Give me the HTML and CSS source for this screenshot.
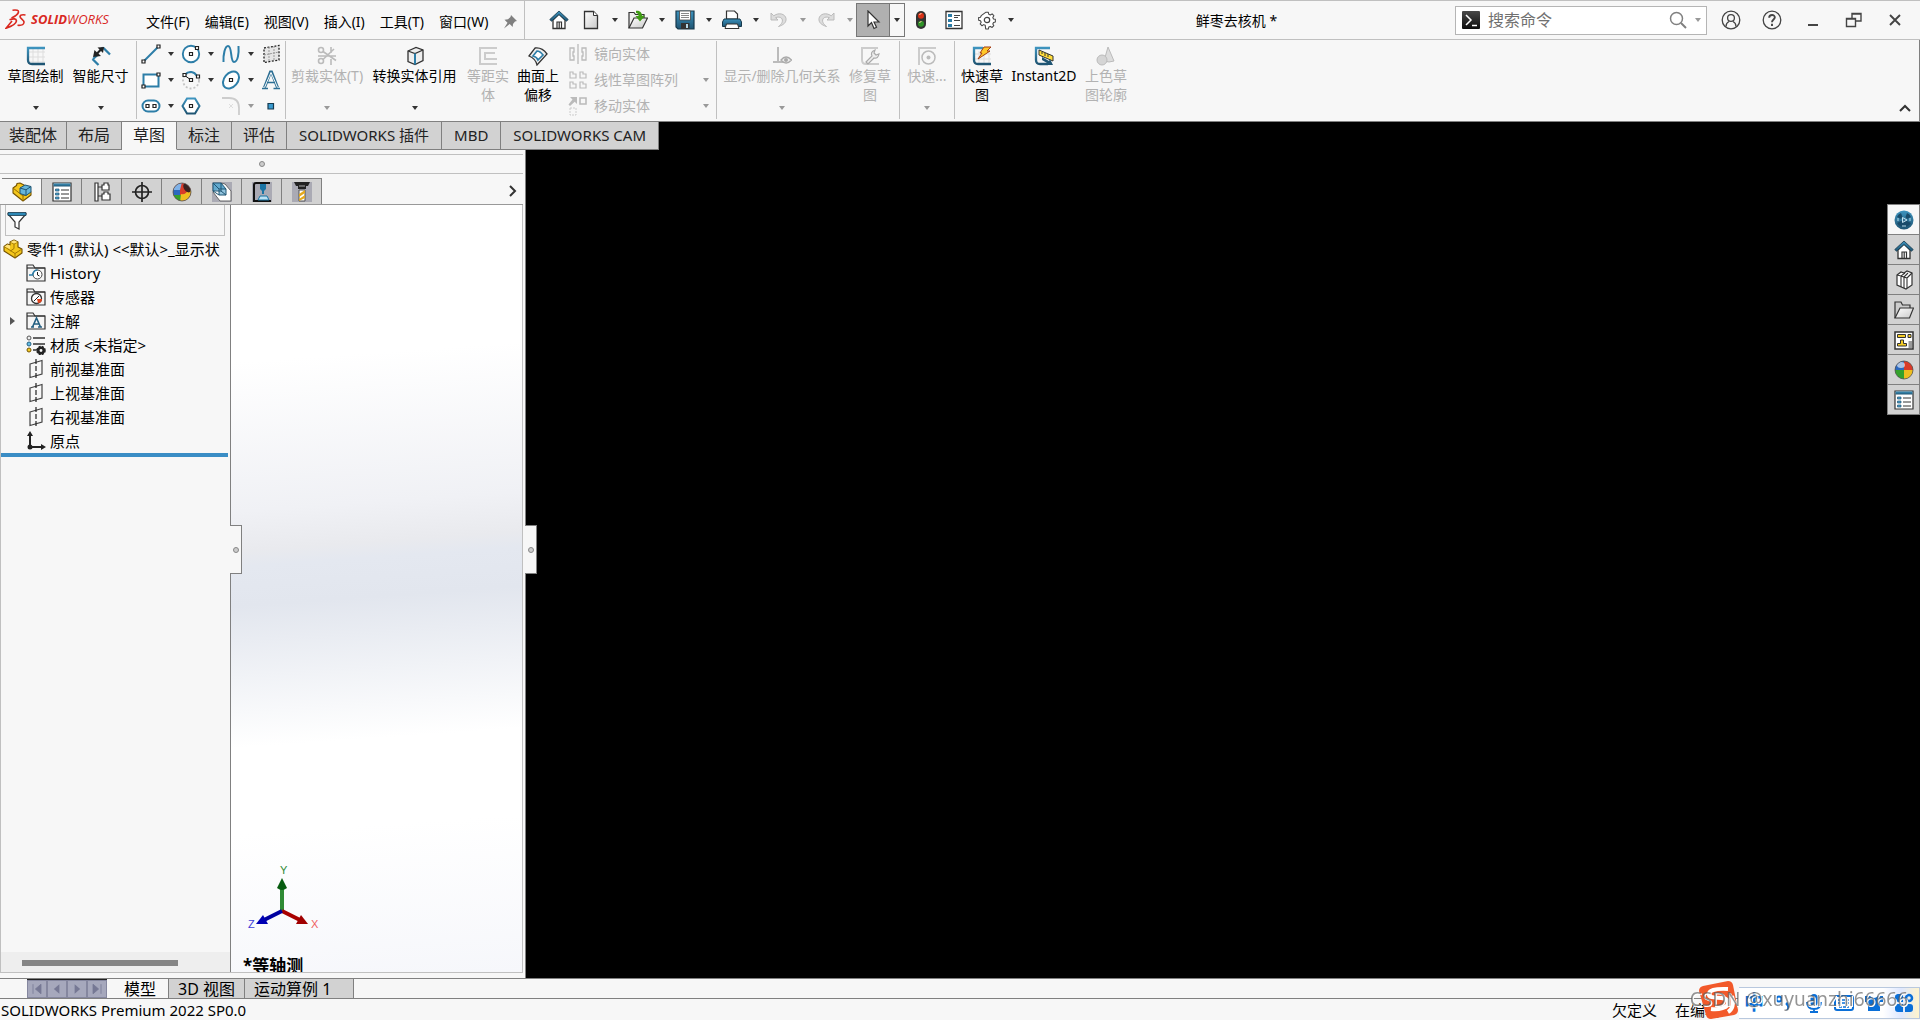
FILE: index.html
```
<!DOCTYPE html>
<html lang="zh-CN">
<head>
    <meta charset="UTF-8">
    <meta name="viewport" content="width=device-width, initial-scale=1.0">
    <title>SOLIDWORKS Premium 2022 SP0.0</title>
    <link rel="stylesheet" href="styles.css">
</head>
<body>
    <!-- shared icons -->
    <svg class="defs" aria-hidden="true">
        <defs>
            <linearGradient id="steel" x1="0" y1="0" x2="0" y2="1"><stop offset="0" stop-color="#3d93be"/><stop offset="1" stop-color="#1f5573"/></linearGradient>
            <linearGradient id="paper" x1="0" y1="0" x2="1" y2="1"><stop offset="0" stop-color="#fff"/><stop offset="1" stop-color="#c9c9c9"/></linearGradient>
            <linearGradient id="dark" x1="0" y1="0" x2="0" y2="1"><stop offset="0" stop-color="#4a4a4a"/><stop offset="1" stop-color="#0c0c0c"/></linearGradient>
            <clipPath id="ballClip"><circle cx="10" cy="10" r="9"/></clipPath>
        </defs>
        <symbol id="i-home" viewBox="0 0 20 20"><path d="M4 10v8.500h12V10L10 4z" fill="#fff" stroke="#333" stroke-width="1.300"/><path d="M8 18.500V12h4.500v6.500M10.200 12v6.500" fill="none" stroke="#333" stroke-width="1.200"/><path d="M10 1 .8 9.500l1.700 1.800L10 4.600l7.500 6.700 1.700-1.800z" fill="url(#steel)" stroke="#16384b" stroke-width=".8"/></symbol>
        <symbol id="i-new" viewBox="0 0 20 20"><path d="M3.500 1.500h9l4 4v13h-13z" fill="url(#paper)" stroke="#333" stroke-width="1.300"/><path d="M12.500 1.500v4h4" fill="#fff" stroke="#333"/></symbol>
        <symbol id="i-open" viewBox="0 0 20 20"><path d="M1 18V2.500h5l1.500 2H16V8" fill="#eee" stroke="#333" stroke-width="1.200"/><path d="M1 18 6 8h13.500L14.500 18z" fill="url(#paper)" stroke="#333" stroke-width="1.200"/><path d="M8 .8c3-.5 6 1 6 5h3L12 11.500 7.500 6h3c0-2-1-3-2.500-3z" fill="#3f9b14"/></symbol>
        <symbol id="i-save" viewBox="0 0 20 20"><path d="M1 1h18v18H3l-2-2z" fill="url(#steel)" stroke="#16384b" stroke-width="1.200"/><path d="M4.500 1h11v9h-11z" fill="#fff" stroke="#444" stroke-width=".8"/><path d="M6 3.500h8M6 5.500h8M6 7.500h8" stroke="#888"/><path d="M6 13h8.500v6H6z" fill="#333"/><path d="M11 14h2v4h-2z" fill="#b5d8e8"/></symbol>
        <symbol id="i-print" viewBox="0 0 20 20"><path d="M4.500 9V1h8l3 3v5z" fill="#fff" stroke="#333" stroke-width="1.200"/><path d="M2 9h16l1.500 3v4.500H.5V12z" fill="url(#steel)" stroke="#16384b"/><path d="M4.500 14h11l1.500 4.500H3z" fill="#fff" stroke="#333"/></symbol>
        <symbol id="i-undo" viewBox="0 0 20 20"><path d="M2 3v7h7L6.600 7.700c5-2 8 1.300 6.400 4.800-.6 1.500-1.800 2.500-3.500 4 5-1.500 8-4 7.500-8C16.300 4 10 2 4.800 5.800z" fill="#ddd" stroke="#bbb"/></symbol>
        <symbol id="i-cursor" viewBox="0 0 20 20"><path d="M5 1v15l3.500-3.500L11 18.500l2.500-1.200L11 12h5z" fill="#fff" stroke="#333" stroke-width="1.200"/></symbol>
        <symbol id="i-light" viewBox="0 0 20 20"><rect x="5" y="1" width="10" height="18" rx="5" fill="#333"/><circle cx="10" cy="5.800" r="3" fill="#d93116"/><circle cx="10" cy="13.700" r="3" fill="#2e9427"/><path d="M8.500 5a2 2 0 0 1 2-1.500M8.500 13a2 2 0 0 1 2-1.500" stroke="#ffc8a8" fill="none"/></symbol>
        <symbol id="i-options" viewBox="0 0 20 20"><path d="M2 1.500h16v17H2z" fill="#fff" stroke="#333" stroke-width="1.300"/><path d="M4 4h4v3H4zM4 9h4v3H4zM4 14h4v3H4z" fill="#2b7ca6"/><path d="M10 5.500h6M10 7.500h4M10 10.500h6M10 15.500h6" stroke="#444"/></symbol>
        <symbol id="i-gear" viewBox="0 0 20 20"><path d="M8.500 1.500h3l.5 2.200 1.800.8 2-1.200 2 2-1.200 2 .8 1.700 2.100.5v3l-2.100.5-.8 1.700 1.200 2-2 2-2-1.200-1.800.8-.5 2.200h-3L8 16.300l-1.800-.8-2 1.200-2-2 1.200-2-.8-1.700-2.100-.5v-3L2.600 7l.8-1.700z" transform="translate(1.200 1) scale(.88)" fill="#fff" stroke="#444" stroke-width="1.200" stroke-linejoin="round"/><circle cx="10" cy="10" r="2.700" fill="#fff" stroke="#444" stroke-width="1.200"/></symbol>
        <symbol id="i-person" viewBox="0 0 20 20"><g fill="none" stroke="#444" stroke-width="1.300"><circle cx="10" cy="10" r="8.800"/><circle cx="10" cy="8" r="3.400"/><path d="M5 16.500c0-3 2-4.500 3-5M15 16.500c0-3-2-4.500-3-5"/></g></symbol>
        <symbol id="i-help" viewBox="0 0 20 20"><g fill="none" stroke="#444"><circle cx="10" cy="10" r="8.800" stroke-width="1.300"/><path d="M7.200 7.700c0-3.700 5.800-3.500 5.600-.2C12.700 9.500 10 9.500 10 12.200M10 13.700V16" stroke-width="1.900"/></g></symbol>
        <symbol id="i-list" viewBox="0 0 20 20"><path d="M1 1h18v18H1z" fill="#fff" stroke="#333" stroke-width="1.200"/><path d="M1.500 1.500h17v3h-17z" fill="url(#steel)"/><path d="M3.500 7h3.500v2H3.500zM3.500 11h3.500v2H3.500zM3.500 15h3.500v2H3.500z" fill="#4aa0cb" stroke="#1f5573" stroke-width=".7"/><path d="M9 8h8M9 12h8M9 16h8" stroke="#333"/></symbol>
        <symbol id="i-part" viewBox="0 0 20 20"><path d="M1 7.500 4.500 5 7 6V3l4-2 4 2v5l4 2v4l-7 5L1 12z" fill="#f3c61c" stroke="#745200" stroke-width="1.100" stroke-linejoin="round"/><path d="m7 3 4 2 4-2M11 5v4.500L7.500 12M1 7.500 12 14.500l7-4.500M12 14.500V19" fill="none" stroke="#9a7100" stroke-width=".9"/><path d="m7.500 3 3.500-1.700L14.500 3 11 4.600zM1.500 7.500l3-2 2.500 1V10z" fill="#ffe27a"/></symbol>
        <symbol id="i-ball" viewBox="0 0 20 20"><g clip-path="url(#ballClip)"><path d="M0 0h10v10H0z" fill="#2c69bf"/><path d="M10 0h10v10H10z" fill="#d83b2a"/><path d="M0 10h10v10H0z" fill="#35a12c"/><path d="M10 10h10v10H10z" fill="#efbe20"/><ellipse cx="7" cy="5" rx="4" ry="3" fill="#fff" opacity=".6"/></g><circle cx="10" cy="10" r="9" fill="none" stroke="#444" stroke-width=".7"/></symbol>
        <symbol id="i-plane" viewBox="0 0 20 20"><path d="m4 5 12-3.500V15L4 18.500z" fill="none" stroke="#444" stroke-width="1.200"/><path d="M10 0v20" stroke="#222" stroke-width="1.200" stroke-dasharray="5 2"/></symbol>
        <symbol id="i-folder" viewBox="0 0 20 20"><path d="M1 18V2h6l2 3h10v13z" fill="#f5f5f5" stroke="#333" stroke-width="1.200"/><path d="M1 5h18" stroke="#333" stroke-width="1.200"/></symbol>
    </svg>

    <header class="titlebar">
        <div class="menu-area">
            <a class="logo" href="#" aria-label="SOLIDWORKS">
                <svg width="22" height="20" viewBox="0 0 22 20"><g fill="none" stroke="#d9281f" stroke-width="1.600"><path d="M7.500 1.200Q14 .5 13.500 3 13 6 6.500 9"/><path d="M4.500 10.800q6.500-2.300 7 1-.5 4-10.500 7.400L7 12"/><path d="M20.500 6q-5-.8-5.500 1.500c-.2 2 4.500 3.500 4 6q-.5 3.300-6.500 2.800"/></g></svg>
                <span><b>SOLID</b>WORKS</span>
            </a>
            <nav class="menu">
                <button>文件(F)</button>
                <button>编辑(E)</button>
                <button>视图(V)</button>
                <button>插入(I)</button>
                <button>工具(T)</button>
                <button>窗口(W)</button>
                <button class="pin" aria-label="固定"><svg width="14" height="14" viewBox="0 0 14 14"><path d="m8 0 6 6-2 .5L10 9l-.3 3-3-3L1 13.500l3.500-5.700-3-3L5 4.300 7.500 2z" fill="#808080"/></svg></button>
            </nav>
        </div>
        <div class="quick">
            <button aria-label="主页"><svg class="ic"><use href="#i-home"/></svg></button>
            <button aria-label="新建"><svg class="ic"><use href="#i-new"/></svg></button><button class="drop" aria-label="新建选项"></button>
            <button aria-label="打开"><svg class="ic"><use href="#i-open"/></svg></button><button class="drop" aria-label="打开选项"></button>
            <button aria-label="保存"><svg class="ic"><use href="#i-save"/></svg></button><button class="drop" aria-label="保存选项"></button>
            <button aria-label="打印"><svg class="ic"><use href="#i-print"/></svg></button><button class="drop" aria-label="打印选项"></button>
            <button aria-label="撤消"><svg class="ic"><use href="#i-undo"/></svg></button><button class="drop off" aria-label="撤消选项"></button>
            <button aria-label="重做"><svg class="ic flip"><use href="#i-undo"/></svg></button><button class="drop off" aria-label="重做选项"></button>
            <span class="picked"><button aria-label="选择"><svg class="ic"><use href="#i-cursor"/></svg></button><button class="drop" aria-label="选择选项"></button></span>
            <button class="plain" aria-label="重建模型"><svg class="ic"><use href="#i-light"/></svg></button>
            <button class="plain" aria-label="文件属性"><svg class="ic"><use href="#i-options"/></svg></button>
            <button class="plain" aria-label="选项"><svg class="ic"><use href="#i-gear"/></svg></button><button class="drop" aria-label="选项列表"></button>
        </div>
        <h1>鲜枣去核机 *</h1>
        <form class="search">
            <svg width="18" height="18" viewBox="0 0 18 18"><rect width="18" height="18" rx="1" fill="url(#dark)"/><path d="m4 4 5 5-5 5M10 14.500h5" fill="none" stroke="#fff" stroke-width="1.500"/></svg>
            <input type="text" placeholder="搜索命令" aria-label="搜索命令">
            <button type="button" aria-label="搜索"><svg width="18" height="18" viewBox="0 0 18 18"><circle cx="7.500" cy="7.500" r="6" fill="none" stroke="#808080" stroke-width="1.500"/><path d="m12 12 5 5" stroke="#808080" stroke-width="2"/></svg></button>
            <button type="button" class="drop off" aria-label="搜索范围"></button>
        </form>
        <div class="window-buttons">
            <button aria-label="登录"><svg class="ic"><use href="#i-person"/></svg></button>
            <button aria-label="帮助"><svg class="ic"><use href="#i-help"/></svg></button>
            <button aria-label="最小化"><svg class="ic" viewBox="0 0 20 20"><path d="M5 15h10" stroke="#444" stroke-width="2"/></svg></button>
            <button aria-label="还原"><svg class="ic" viewBox="0 0 20 20"><path d="M8 8V3.500h9V11h-5.500M2.500 8.500h9v8h-9zM2 9h10M8 4h9" fill="none" stroke="#444" stroke-width="1.400"/></svg></button>
            <button aria-label="关闭"><svg class="ic" viewBox="0 0 20 20"><path d="m5 5 10 10M15 5 5 15" stroke="#444" stroke-width="1.900"/></svg></button>
        </div>
    </header>

    <div class="ribbon">
        <section class="group">
            <button class="tool w-m arrow"><svg class="ic" viewBox="0 0 20 20"><path d="M7 1v18M12 1v18M17 1v18M3 6h16M3 11h16M3 16h16" stroke="#ddd"/><path d="M19 2H2v12q0 4 4 4h13" fill="none" stroke="url(#steel)" stroke-width="2.300"/></svg><span>草图绘制</span></button>
            <button class="tool w-m arrow"><svg class="ic" viewBox="0 0 20 20"><path d="m1.500 13 6 6M12 1.500l7 7M2 13l4-3.500M12 1.500l-2 2" stroke="#2d7ea8" stroke-width="2.300"/><path d="m2 11 1.500-7L5.800 6.200 8.500 3.500 6.500 1.500 13 1l-1 6-2-2-2.500 2.500L10 10z" fill="#222"/></svg><span>智能尺寸</span></button>
        </section>
        <section class="group sketch-grid">
            <div class="cell"><button aria-label="直线"><svg class="ic" viewBox="0 0 20 20"><path d="M2.500 17.500 17.500 2.500" stroke="#2d7ea8" stroke-width="2"/><path d="M16 1h3v3h-3zM1 16h3v3H1z" fill="#fff" stroke="#222" stroke-width="1.200"/></svg></button><button class="drop" aria-label="直线选项"></button></div>
            <div class="cell"><button aria-label="圆"><svg class="ic" viewBox="0 0 20 20"><circle cx="10" cy="10" r="8.200" fill="#fff" stroke="#2d7ea8" stroke-width="1.900"/><path d="M8.500 8.500h3v3h-3zM14.500 2.500h3v3h-3z" fill="#fff" stroke="#222" stroke-width="1.200"/></svg></button><button class="drop" aria-label="圆选项"></button></div>
            <div class="cell"><button aria-label="样条曲线"><svg class="ic" viewBox="0 0 20 20"><path d="M2.500 18C2 11 4 2 7 2c4.500 0 2 16 6 16 4 0 5-9 4.500-16" fill="none" stroke="#2d7ea8" stroke-width="2"/></svg></button><button class="drop" aria-label="样条曲线选项"></button></div>
            <div class="cell"><button aria-label="平面"><svg class="ic" viewBox="0 0 20 20"><path d="m3 4 15-2.500V16L3 18.500z" fill="#e6e6e6" stroke="#222" stroke-width="1.300" stroke-dasharray="2 1.500"/><path d="M8 3v15M13 2v15M3 11l15-3" stroke="#999" stroke-dasharray="2 1"/></svg></button></div>
            <div class="cell"><button aria-label="矩形"><svg class="ic" viewBox="0 0 20 20"><path d="M2.500 4.500h15v12h-15z" fill="#fff" stroke="#2d7ea8" stroke-width="2"/><path d="M16 3h3v3h-3zM1 15h3v3H1z" fill="#fff" stroke="#222" stroke-width="1.200"/></svg></button><button class="drop" aria-label="矩形选项"></button></div>
            <div class="cell"><button aria-label="圆弧"><svg class="ic" viewBox="0 0 20 20"><circle cx="10" cy="10.500" r="8" fill="none" stroke="#c5c5c5" stroke-width="1.800" stroke-dasharray="2 2"/><path d="M4 4.500c4-4 9-3 12 1.500" fill="none" stroke="#2d7ea8" stroke-width="2"/><path d="m3 5 7 5" stroke="#222"/><path d="M2 3.500h3v3H2zM8.500 8.500h3v3h-3zM15.500 5h3v3h-3z" fill="#fff" stroke="#222" stroke-width="1.200"/></svg></button><button class="drop" aria-label="圆弧选项"></button></div>
            <div class="cell"><button aria-label="椭圆"><svg class="ic" viewBox="0 0 20 20"><ellipse cx="10" cy="10" rx="9.500" ry="6.800" transform="rotate(-50 10 10)" fill="#fff" stroke="#2d7ea8" stroke-width="2"/><path d="M8.500 8.500h3v3h-3z" fill="#fff" stroke="#222" stroke-width="1.200"/></svg></button><button class="drop" aria-label="椭圆选项"></button></div>
            <div class="cell"><button aria-label="文字"><svg class="ic" viewBox="0 0 20 20"><path d="m3.500 17.500 6-15.500h1l6 15.500" fill="none" stroke="#2d6f94" stroke-width="3"/><path d="m3.500 17.500 6.500-15 6.500 15" fill="none" stroke="#fff"/><path d="M1 18.500h6M12.500 18.500H19M6 12.500h8" stroke="#2d6f94" stroke-width="1.500"/></svg></button></div>
            <div class="cell"><button aria-label="槽口"><svg class="ic" viewBox="0 0 20 20"><rect x="1.500" y="4.500" width="17" height="11" rx="5.500" fill="#fff" stroke="#2d7ea8" stroke-width="2"/><path d="M5 8.500h3v3H5zM12 8.500h3v3h-3z" fill="#fff" stroke="#222" stroke-width="1.200"/></svg></button><button class="drop" aria-label="槽口选项"></button></div>
            <div class="cell"><button aria-label="多边形"><svg class="ic" viewBox="0 0 20 20"><path d="M6 2.500h8l4.500 7.500-4.500 7.500H6L1.500 10z" fill="#fff" stroke="url(#steel)" stroke-width="2"/><path d="M8.500 8.500h3v3h-3z" fill="#fff" stroke="#222" stroke-width="1.200"/></svg></button></div>
            <div class="cell"><button aria-label="圆角"><svg class="ic" viewBox="0 0 20 20"><path d="M1 2h7q10 0 10 10v7" fill="none" stroke="#ccc" stroke-width="1.800"/><path d="m8 8 4 4m0-4-4 4" stroke="#ddd"/></svg></button><button class="drop off" aria-label="圆角选项"></button></div>
            <div class="cell"><button aria-label="点"><svg class="ic" viewBox="0 0 20 20"><path d="M7 7.500h5.500V13H7z" fill="#3a9bd0" stroke="#163b50" stroke-width="1.200"/></svg></button></div>
        </section>
        <section class="group">
            <button class="tool w-l arrow" disabled><svg class="ic" viewBox="0 0 20 20"><g fill="none" stroke="#bbb" stroke-width="1.600"><circle cx="4" cy="4" r="2.500"/><circle cx="4" cy="15" r="2.500"/><path d="m6 5.500 13 9M6 13.500 17 3M1 10h18M14 1v6M14 13v6"/></g></svg><span>剪裁实体(T)</span></button>
            <button class="tool w-xl arrow"><svg class="ic" viewBox="0 0 20 20"><path d="m3 5 8-3.500L18 4v10.500l-8 4-7-3z" fill="#eee" stroke="#333" stroke-width="1.300"/><path d="m3 5 7 2.500L18 4" fill="none" stroke="#333" stroke-width="1.300"/><path d="M10 7.500v11" stroke="#2d7ea8" stroke-width="2"/></svg><span>转换实体引用</span></button>
            <button class="tool w-s" disabled><svg class="ic" viewBox="0 0 20 20"><path d="M19 2H2v16h17M17 7H7v6h12" fill="none" stroke="#ccc" stroke-width="2"/></svg><span>等距实体</span></button>
            <button class="tool w-n"><svg class="ic" viewBox="0 0 20 20"><path d="m1 10 6-8q7-1 12 6L9 19q-1-6-8-9z" fill="#eee" stroke="#333" stroke-width="1.300"/><path d="m5 10 4-5q3 0 6 4l-5 5q-1-3-5-4z" fill="#fff" stroke="#2d7ea8" stroke-width="1.700"/></svg><span>曲面上偏移</span></button>
            <div class="stack">
                <div><button disabled><svg class="ic" viewBox="0 0 20 20"><path d="M10 0v20M2 4h4v4H5v4h1v4H2zM18 4h-4v4h1v4h-1v4h4z" fill="none" stroke="#bbb" stroke-width="1.300"/></svg>镜向实体</button></div>
                <div><button disabled><svg class="ic" viewBox="0 0 20 20"><path d="M2 2h3v2h3v4H2zM12 2h3v2h3v4h-6zM2 12h3v2h3v4H2zM12 12h3v2h3v4h-6z" fill="none" stroke="#bbb" stroke-width="1.200"/></svg>线性草图阵列</button><button class="drop off" aria-label="阵列选项"></button></div>
                <div><button disabled><svg class="ic" viewBox="0 0 20 20"><path d="M12 2h6v6h-6z" fill="none" stroke="#bbb" stroke-width="1.600"/><path d="M2 1h7v7L6.700 5.700 2 10 .5 8.500 4.500 3.500z" fill="#bbb"/><path d="M2 12h6v7H2z" fill="none" stroke="#ccc" stroke-dasharray="2 1"/></svg>移动实体</button><button class="drop off" aria-label="移动选项"></button></div>
            </div>
        </section>
        <section class="group">
            <button class="tool w-xxl arrow" disabled><svg class="ic" viewBox="0 0 20 20"><path d="M6 1v15M1 16h10" stroke="#bbb" stroke-width="2"/><path d="M9 14q5-6 10.500 0-5.500 6-10.500 0z" fill="#eee" stroke="#aaa" stroke-width="1.300"/><circle cx="14" cy="14" r="2" fill="#aaa"/></svg><span>显示/删除几何关系</span></button>
            <button class="tool w-n" disabled><svg class="ic" viewBox="0 0 20 20"><path d="M18 2H2v12q0 4 4 4h13" fill="none" stroke="#ccc" stroke-width="2"/><path d="m6 16 6-6q-2-4 3-6l-1 3 2 2 3-1q-1 5-5 4l-6 6z" fill="#eee" stroke="#aaa" stroke-width="1.200"/></svg><span>修复草图</span></button>
        </section>
        <section class="group">
            <button class="tool w-s arrow" disabled><svg class="ic" viewBox="0 0 20 20"><path d="M19 2H2v17" fill="none" stroke="#ccc" stroke-width="2"/><circle cx="11.500" cy="11.500" r="6.500" fill="none" stroke="#bbb" stroke-width="1.500"/><circle cx="11.500" cy="11.500" r="2" fill="#bbb"/></svg><span>快速...</span></button>
        </section>
        <section class="group last">
            <button class="tool w-s"><svg class="ic" viewBox="0 0 20 20"><path d="M7 5v14M12 5v14M17 5v14M3 8h16M3 13h16" stroke="#ddd"/><path d="M11 2H2v12q0 4 4 4h13" fill="none" stroke="url(#steel)" stroke-width="2.300"/><path d="M12 1h7l-4 4h3L6 13l4-6H8z" fill="#ffc928" stroke="#a43c12"/></svg><span>快速草图</span></button>
            <button class="tool w-l"><svg class="ic" viewBox="0 0 20 20"><path d="M16 2H2v12q0 4 4 4h8" fill="none" stroke="url(#steel)" stroke-width="2.300"/><path d="m5 4 14 6v5L5 9z" fill="#ffdc3b" stroke="#333"/><path d="M8 6v2M11 7v3M14 8v3" stroke="#333"/><path d="m8 11 7 4 1-2 3 6h-7l1-2-5-3z" fill="#1f5573"/></svg><span>Instant2D</span></button>
            <button class="tool w-s" disabled><svg class="ic" viewBox="0 0 20 20"><path d="m12 1 6 14q-5 2-10 0z" fill="#ddd" stroke="#bbb"/><circle cx="6" cy="14" r="5" fill="#d5d5d5" stroke="#bbb"/></svg><span>上色草图轮廓</span></button>
        </section>
        <button class="collapse" aria-label="折叠"><svg width="12" height="8" viewBox="0 0 12 8"><path d="m1 7 5-5 5 5" fill="none" stroke="#333" stroke-width="2"/></svg></button>
    </div>

    <nav class="command-tabs">
        <button class="narrow">装配体</button>
        <button>布局</button>
        <button class="active">草图</button>
        <button>标注</button>
        <button>评估</button>
        <button class="latin">SOLIDWORKS 插件</button>
        <button class="latin">MBD</button>
        <button class="latin">SOLIDWORKS CAM</button>
    </nav>

    <main class="workspace">
        <div class="document">
            <div class="splitter"><i class="dot"></i></div>
            <div class="manager-tabs">
                <button class="active" aria-label="设计树"><svg class="ic" viewBox="0 0 20 20"><path d="M1 6 4.500 3.500 5 1.500 8 1l4 2v5l7 2v3l-8 6-10-8z" fill="#f3c61c" stroke="#745200" stroke-width="1.100" stroke-linejoin="round"/><path d="m1 6 10 8 8-4M11 14v5" fill="none" stroke="#9a7100"/><path d="m8 6 5-3 6 1.500V10l-5 3.500-6-2z" fill="#67b6db" stroke="#1f5573"/><path d="m8 6 6 1.800L19 4.500M14 8v5.500" fill="none" stroke="#1f5573"/></svg></button>
                <button aria-label="属性"><svg class="ic"><use href="#i-list"/></svg></button>
                <button aria-label="配置"><svg class="ic" viewBox="0 0 20 20"><path d="M3 1v18h3V1zM6 5h4M6 14h4" fill="#fff" stroke="#333" stroke-width="1.200"/><path d="M10 3h2V1h4v2h1v5h-7zM10 12h2v-2h4v2h2v6h-8z" fill="#fff" stroke="#333" stroke-width="1.200"/></svg></button>
                <button aria-label="尺寸专家"><svg class="ic" viewBox="0 0 20 20"><circle cx="10" cy="10" r="6.500" fill="none" stroke="#222" stroke-width="1.700"/><path d="M10 0v20M0 10h20" stroke="#222" stroke-width="1.700"/></svg></button>
                <button aria-label="外观"><svg class="ic" viewBox="0 0 20 20"><g clip-path="url(#ballClip)"><path d="M0 0h20v20H0z" fill="#d83b2a"/><path d="M0 0h10L8 8 0 9z" fill="#7fb2e8"/><path d="M0 8h8v6H0z" fill="#2c69bf"/><path d="M0 13h9v7H0z" fill="#35a12c"/><path d="M9 12q5 1 7-4h4v12H8z" fill="#efbe20"/><ellipse cx="15" cy="6" rx="3" ry="5" transform="rotate(-35 15 6)" fill="#3a2222"/></g><circle cx="10" cy="10" r="9" fill="none" stroke="#555" stroke-width=".8"/></svg></button>
                <button aria-label="CAM 特征"><svg class="ic shade" viewBox="0 0 20 20"><path d="m9 1 4 1 6 7v10H8l-7-9z" fill="#fff" stroke="#666"/><path d="M1 1h8l5 6H7L1 9z" fill="#62a9ce"/><path d="M1 1h8v8H1zM7 7h7v6H7z" fill="#62a9ce" fill-opacity=".7" stroke="#1f5573"/><path d="m1 1 6 6M9 1l5 6M9 9l5 4M1 9l6 4" fill="none" stroke="#1f5573"/></svg></button>
                <button aria-label="CAM 操作"><svg class="ic shade" viewBox="0 0 20 20"><path d="M18 1H4Q2 1 2 3v16h17" fill="none" stroke="#111" stroke-width="2"/><path d="M8 2h6v5l-2 2v3h-2V9L8 7z" fill="#1974a4"/><path d="M8 14h7l2 4H6z" fill="#bce2f4" stroke="#1974a4"/></svg></button>
                <button aria-label="CAM 刀具"><svg class="ic shade" viewBox="0 0 20 20"><path d="M2 0h16l-2 4h-2v3H6V4H4z" fill="#222"/><path d="M7 4h6" stroke="#aaa"/><path d="M7 8h6v11H7z" fill="#fff" stroke="#555"/><path d="m7 12 6-4v3l-6 4zm0 5 6-4v3l-6 3z" fill="#e4a91d"/></svg></button>
                <button class="more" aria-label="更多"><svg width="10" height="12" viewBox="0 0 10 12"><path d="m2 1 5 5-5 5" fill="none" stroke="#333" stroke-width="2"/></svg></button>
            </div>
            <div class="panes">
                <aside class="tree-pane">
                    <div class="filter"><svg class="ic" viewBox="0 0 20 20"><path d="M1 3h18l-7 8v7l-4-2v-5z" fill="#fff" stroke="#333" stroke-width="1.200"/><path d="M1 1.500h18v3H1z" fill="#2d88b5" stroke="#16384b" stroke-width=".8"/></svg></div>
                    <ul class="tree">
                        <li class="root"><svg class="ic"><use href="#i-part"/></svg>零件1 (默认) &lt;&lt;默认&gt;_显示状</li>
                        <li><svg class="ic" viewBox="0 0 20 20"><use href="#i-folder"/><circle cx="11.500" cy="11.500" r="4.500" fill="#fff" stroke="#444"/><path d="M11.500 9v3l2 1" fill="none" stroke="#222"/><path d="M3 12h3.500q1-5 5-5" fill="none" stroke="#2d7ea8" stroke-width="1.700"/></svg>History</li>
                        <li><svg class="ic" viewBox="0 0 20 20"><use href="#i-folder"/><circle cx="10.500" cy="11.500" r="5" fill="#fff" stroke="#333" stroke-width="1.300"/><path d="m8 14 5-5" stroke="#222"/><path d="M11 12h5q0 4-4 4z" fill="#e1421b"/></svg>传感器</li>
                        <li class="closed"><svg class="ic" viewBox="0 0 20 20"><use href="#i-folder"/><path d="M5 16h3M12 16h4M6.500 16l4-9 4 9M8 13h5" fill="none" stroke="#245f81" stroke-width="1.600"/></svg>注解</li>
                        <li><svg class="ic" viewBox="0 0 20 20"><path d="M7 3h12M7 9h12M7 15h6" stroke="#333" stroke-width="1.600"/><circle cx="3" cy="3" r="2" fill="#eee" stroke="#555"/><circle cx="3" cy="9" r="2" fill="#65bde5" stroke="#245f81"/><circle cx="3" cy="15" r="2" fill="#f4cc25" stroke="#745200"/><circle cx="15" cy="15.500" r="2.700" fill="none" stroke="#222" stroke-width="2.500"/><circle cx="15" cy="15.500" r="4" fill="none" stroke="#222" stroke-width="1.500" stroke-dasharray="2 1.200"/></svg>材质 &lt;未指定&gt;</li>
                        <li><svg class="ic"><use href="#i-plane"/></svg>前视基准面</li>
                        <li><svg class="ic"><use href="#i-plane"/></svg>上视基准面</li>
                        <li><svg class="ic"><use href="#i-plane"/></svg>右视基准面</li>
                        <li><svg class="ic" viewBox="0 0 20 20"><path d="M4 3v13h12" fill="none" stroke="#222" stroke-width="2"/><path d="M4 0 1 5h6zM20 16l-5-3v6z" fill="#222"/><circle cx="4" cy="16" r="2.500" fill="#222"/></svg>原点</li>
                    </ul>
                    <div class="scrollbar"><i></i></div>
                    <button class="handle" aria-label="折叠设计树"><i class="dot"></i></button>
                </aside>
                <div class="viewport">
                    <svg class="triad" width="80" height="72" viewBox="0 0 80 72">
                        <path d="M35 48V22" stroke="#2f8b35" stroke-width="4"/><path d="m35 15-5 10q5 4 10 0z" fill="#075c10"/>
                        <path d="m35 48 18 9" stroke="#a90000" stroke-width="4"/><path d="m61 61-12 0 5-9z" fill="#a00000"/>
                        <path d="m35 48-18 9" stroke="#0000a0" stroke-width="4"/><path d="m9 61 12 0-5-9z" fill="#0000b4"/>
                        <text x="33" y="11" fill="#2f8b35">Y</text><text x="64" y="65" fill="#f06060">X</text><text x="1" y="65" fill="#4040d8">Z</text>
                    </svg>
                    <p>*等轴测</p>
                </div>
            </div>
            <button class="handle outer" aria-label="折叠窗口"><i class="dot"></i></button>
        </div>
        <aside class="task-pane">
            <button class="active" aria-label="3DEXPERIENCE"><svg class="ic" viewBox="0 0 20 20"><circle cx="10" cy="10" r="9.500" fill="url(#steel)"/><path d="M3 7a8 8 0 0 1 4-4l1.500 4L7 9zM17 7a8 8 0 0 0-4-4l-1.500 4L13 9zM3 13a8 8 0 0 0 14 0l-4-2H7z" fill="#194b6a"/><path d="m8.500 7.500 4.500 2.500-4.500 2.500z" fill="#356f90" stroke="#c5e3f1"/><path d="M8 16h4M4 8v3M16 8v3" stroke="#b8dded"/></svg></button>
            <button aria-label="SOLIDWORKS 资源"><svg class="ic"><use href="#i-home"/></svg></button>
            <button aria-label="设计库"><svg class="ic" viewBox="0 0 20 20"><path d="m3 5 4-3 3 1 3-2 5 2v12l-6 4-9-4z" fill="#fff" stroke="#333" stroke-width="1.200"/><path d="m3 5 4 1 4-3M7 6v11M7 6l3 1 4-4M10 7v11M10 7l3 1 5-5M13 8v10" fill="none" stroke="#333" stroke-width="1.100"/></svg></button>
            <button aria-label="文件探索器"><svg class="ic" viewBox="0 0 20 20"><path d="M1 18V2h6l1.500 3H16v3" fill="#ccc" stroke="#333" stroke-width="1.200"/><path d="M1 18 6 8h13.500l-4 10z" fill="url(#paper)" stroke="#333" stroke-width="1.200"/></svg></button>
            <button aria-label="视图调色板"><svg class="ic" viewBox="0 0 20 20"><path d="M1 2h18v17H1z" fill="#fff" stroke="#333" stroke-width="1.500"/><path d="M3.500 4.500h8v3h-8zM14 4.500h3v3h-3zM6.500 10h3v3.500h3V16h-9v-2.500h3z" fill="#f4cc25" stroke="#333"/><path d="M14.500 11H18v7h-3.500z" fill="#999"/></svg></button>
            <button aria-label="外观、布景和贴图"><svg class="ic"><use href="#i-ball"/></svg></button>
            <button aria-label="自定义属性"><svg class="ic"><use href="#i-list"/></svg></button>
        </aside>
    </main>

    <div class="model-tabs">
        <div class="steps">
            <button aria-label="第一个"><svg viewBox="0 0 20 20"><path d="M5 4v12M15 4v12L8 10z" fill="#767894" stroke="#767894"/></svg></button>
            <button aria-label="上一个"><svg viewBox="0 0 20 20"><path d="M13 4v12L6 10z" fill="#767894"/></svg></button>
            <button aria-label="下一个"><svg viewBox="0 0 20 20"><path d="M7 4v12l7-6z" fill="#767894"/></svg></button>
            <button aria-label="最后一个"><svg viewBox="0 0 20 20"><path d="M15 4v12M5 4v12l7-6z" fill="#767894" stroke="#767894"/></svg></button>
        </div>
        <button class="active">模型</button>
        <button>3D 视图</button>
        <button class="wide">运动算例 1</button>
    </div>

    <footer class="statusbar">
        <span>SOLIDWORKS Premium 2022 SP0.0</span>
        <span class="state"><span>欠定义</span><span>在编辑</span></span>
    </footer>

    <!-- input method bar floating above the status bar -->
    <div class="ime">
        <svg class="sogou" width="40" height="38" viewBox="0 0 40 38"><path d="M4 5 29 0q4 0 5 4l5 25q0 4-4 5L12 38q-4 0-5-4L0 10q0-4 4-5z" fill="#f2592a"/><path d="M29 8Q9 7 10 14c1 5 18 0 19 7 1 6-10 8-17 7M33 15q3 12-4 16" fill="none" stroke="#fff" stroke-width="4"/></svg>
        <div class="ime-bar">
            <button>中</button>
            <button aria-label="标点"><svg class="ic" viewBox="0 0 20 20"><circle cx="5" cy="6" r="2.500" fill="none" stroke="#0a6fd8" stroke-width="2"/><path d="M13 9q4 0 3 4t-4 5q2-3 1-5-3-2 0-4z" fill="#0a6fd8"/></svg></button>
            <button aria-label="语音"><svg class="ic" viewBox="0 0 20 20"><rect x="6.500" y="1" width="7" height="12" rx="3.500" fill="#0a6fd8"/><path d="M3 9q0 7 7 7t7-7M10 16v3M6 19h8" fill="none" stroke="#0a6fd8" stroke-width="1.800"/></svg></button>
            <button aria-label="键盘"><svg class="ic" viewBox="0 0 20 20"><rect x="1" y="3" width="18" height="14" rx="2" fill="none" stroke="#0a6fd8" stroke-width="2"/><path d="M4 7h12M4 10h12M5 14h10" stroke="#0a6fd8" stroke-width="1.700" stroke-dasharray="3 1"/></svg></button>
            <button aria-label="皮肤"><svg class="ic" viewBox="0 0 20 20"><path d="M1 3h5q4 4 8 0h5v6h-3v9H4V9H1z" fill="#0a6fd8"/></svg></button>
            <button aria-label="工具箱"><svg class="ic" viewBox="0 0 20 20"><path d="M1 4q0-3 3-3h5v8H4q-3 0-3-3zM1 14q0-3 3-3h5v8H4q-3 0-3-3zM11 11h5q3 0 3 3v2q0 3-3 3h-5z" fill="#0a6fd8"/><circle cx="15" cy="5" r="3" fill="none" stroke="#0a6fd8" stroke-width="2.500"/></svg></button>
        </div>
        <span class="watermark">CSDN @xuyuanzhi66666</span>
    </div>
</body>
</html>
```
FILE: styles.css
```
* {
    box-sizing: border-box;
}

body {
    margin: 0;
    min-height: 100vh;
    display: flex;
    flex-direction: column;
    background: #000;
    color: #000;
    font-family: "Noto Sans", "Noto Sans CJK SC", sans-serif;
    font-size: 14px;
    line-height: 20px;
}

button {
    display: flex;
    align-items: center;
    justify-content: center;
    padding: 0;
    border: 0;
    background: none;
    color: inherit;
    font: inherit;
    white-space: nowrap;
}

.defs {
    position: absolute;
    width: 0;
    height: 0;
}

.ic {
    width: 20px;
    height: 20px;
    flex: none;
}

.flip {
    transform: scaleX(-1);
}

/* small triangle used by every drop-down */
.drop::after,
.arrow::after {
    content: "";
    border: 3px solid transparent;
    border-top: 4px solid #333;
    border-bottom: 0;
}

.drop.off::after,
.arrow:disabled::after {
    border-top-color: #999;
}

.dot {
    width: 6px;
    height: 6px;
    border: 1px solid #888;
    border-radius: 50%;
    background: #ccc;
}

/* title bar */
.titlebar {
    display: flex;
    height: 40px;
    background: #f7f7f7;
    border-top: 1px solid #c0c0c0;
    border-bottom: 1px solid #c0c0c0;
}

.menu-area {
    display: flex;
    width: 525px;
    flex: none;
    border-right: 1px solid #c0c0c0;
}

.logo {
    display: flex;
    align-items: center;
    width: 146px;
    padding: 0 0 2px 5px;
    gap: 4px;
    color: #d9281f;
    font-family: "Open Sans", sans-serif;
    font-size: 13px;
    font-style: italic;
    text-decoration: none;
}

.menu {
    display: flex;
    align-items: center;
    gap: 15px;
    padding-top: 4px;
}

.quick {
    display: flex;
    align-items: center;
    padding-left: 18px;
}

.quick button {
    width: 32px;
    height: 32px;
}

.quick .plain {
    width: 33px;
}

.quick .drop {
    width: 15px;
}

.picked {
    display: flex;
    background: #b0b0b0;
    outline: 1px solid #777;
}

.picked .drop {
    background: #f7f7f7;
    border-left: 1px solid #777;
}

.titlebar h1 {
    flex: 1;
    margin: 0;
    padding-top: 2px;
    font-size: 14px;
    font-weight: normal;
    line-height: 36px;
    text-align: center;
}

.search {
    display: flex;
    align-items: center;
    align-self: center;
    width: 252px;
    height: 29px;
    padding: 0 5px 0 6px;
    gap: 8px;
    background: #fff;
    border: 1px solid #b5b5b5;
}

.search input {
    flex: 1;
    min-width: 0;
    padding: 0;
    border: 0;
    font: 16px "Noto Sans", "Noto Sans CJK SC", sans-serif;
}

.search input::placeholder {
    color: #707070;
    opacity: 1;
}

.window-buttons {
    display: flex;
    padding: 0 5px 0 3px;
}

.window-buttons button {
    width: 41px;
}

/* ribbon */
.ribbon {
    display: flex;
    height: 82px;
    padding-top: 1px;
    background: #f7f7f7;
    border-right: 1px solid #808080;
    border-bottom: 1px solid #808080;
}

.group {
    display: flex;
    padding: 0 3px;
    margin-bottom: 2px;
    border-right: 1px solid #c0c0c0;
}

.group.last {
    border: 0;
}

.tool {
    flex-direction: column;
    justify-content: flex-start;
    padding: 5px 0 9px;
    line-height: 19px;
}

.tool span {
    white-space: normal;
    word-break: break-all;
}

.tool.arrow::after {
    margin-top: auto;
}

.tool:disabled,
.stack button {
    color: #b2b2b2;
}

.w-s,
.w-n {
    width: 48px;
    padding-left: 2px;
    padding-right: 2px;
}

.w-n {
    width: 52px;
    padding-left: 4px;
    padding-right: 4px;
}

.w-m {
    width: 65px;
}

.w-l {
    width: 76px;
}

.w-xl {
    width: 99px;
}

.w-xxl {
    width: 124px;
}

.sketch-grid {
    display: grid;
    grid-template-columns: 40px 40px 40px 21px;
    grid-auto-rows: 26px;
    padding-left: 4px;
}

.cell {
    display: flex;
}

.cell .drop {
    width: 20px;
}

.stack {
    display: flex;
    flex-direction: column;
    width: 149px;
    padding-left: 4px;
}

.stack div {
    display: flex;
    justify-content: space-between;
    height: 26px;
}

.stack button {
    gap: 6px;
}

.stack .drop {
    width: 14px;
}

.collapse {
    margin: auto 8px 9px auto;
}

.command-tabs {
    display: flex;
    height: 28px;
    font-size: 16px;
}

.command-tabs button {
    padding: 0 11px 2px;
    background: #d2d2d2;
    border-right: 1px solid #808080;
    border-bottom: 1px solid #808080;
    color: #222;
}

.command-tabs .narrow {
    padding: 0 9px 2px;
}

.command-tabs .latin {
    padding: 0 12px 2px;
    font-size: 15px;
}

.command-tabs .active {
    background: #f7f7f7;
    border-bottom-color: #f7f7f7;
}

/* document window */
.workspace {
    display: flex;
    flex: 1;
    justify-content: space-between;
}

.document {
    position: relative;
    display: flex;
    flex-direction: column;
    width: 526px;
    padding-bottom: 5px;
    background: #f7f7f7;
    border-right: 1px solid #808080;
}

.splitter {
    display: flex;
    align-items: center;
    justify-content: center;
    height: 20px;
    margin: 4px 2px 0 0;
    border-top: 1px solid #c0c0c0;
    border-bottom: 1px solid #c0c0c0;
}

.manager-tabs {
    display: flex;
    height: 31px;
    padding: 4px 0 0 2px;
    margin-right: 2px;
    border-bottom: 1px solid #999;
}

.manager-tabs button {
    width: 40px;
    background: #d2d2d2;
    border-top: 1px solid #808080;
    border-right: 1px solid #808080;
}

.manager-tabs .active {
    background: #f7f7f7;
}

.manager-tabs .more {
    width: 20px;
    margin-left: auto;
    background: none;
    border: 0;
}

.shade {
    background: #aaaab4;
}

.panes {
    display: flex;
    flex: 1;
    margin-right: 2px;
    border: 1px solid #c0c0c0;
    border-top: 0;
}

.tree-pane {
    position: relative;
    display: flex;
    flex-direction: column;
    width: 230px;
    border-right: 1px solid #808080;
}

.filter {
    height: 31px;
    margin: 0 5px 0 4px;
    padding: 6px 0 0 1px;
    border: 1px solid #c0c0c0;
    border-top: 0;
}

.tree {
    margin: 0 2px 0 0;
    padding: 1px 0 0;
    border-bottom: 4px solid #3a8dc5;
    list-style: none;
    font-size: 15px;
    line-height: 24px;
}

.tree li {
    display: flex;
    align-items: center;
    gap: 4px;
    padding-left: 25px;
    white-space: nowrap;
}

.tree .root {
    padding-left: 2px;
}

.tree .closed {
    padding-left: 9px;
}

.closed::before {
    content: "";
    margin-right: 3px;
    border: 4px solid transparent;
    border-left: 5px solid #555;
    border-right: 4px solid transparent;
}

.scrollbar {
    height: 20px;
    margin-top: auto;
    padding: 8px 52px 6px 21px;
    background: #eee;
}

.scrollbar i {
    display: block;
    height: 6px;
    background: #858585;
}

.handle {
    position: absolute;
    z-index: 1;
    top: 320px;
    right: -12px;
    width: 12px;
    height: 49px;
    background: #f7f7f7;
    border: 1px solid #808080;
    border-left: 0;
}

.handle.outer {
    top: 375px;
}

.viewport {
    display: flex;
    flex: 1;
    flex-direction: column;
    justify-content: flex-end;
    background: linear-gradient(176deg, #fff 20%, #f0f1f5 39%, #e9eaee 44%, #e4e8f0 46%, #e2e6ee 51%, #fff 69%, #fff 80%, #f6f7fb 100%);
}

.triad {
    margin-left: 16px;
    font: 11px "Liberation Sans", sans-serif;
}

.viewport p {
    height: 17px;
    margin: 20px 0 0 12px;
    overflow: hidden;
    font-size: 17px;
    font-weight: bold;
    line-height: 22px;
}

.task-pane {
    align-self: flex-start;
    width: 33px;
    margin-top: 54px;
    border: 1px solid #808080;
}

.task-pane button {
    width: 100%;
    height: 30px;
    background: #d2d2d2;
    border-bottom: 1px solid #808080;
}

.task-pane .active {
    background: #f7f7f7;
}

.task-pane button:last-child {
    height: 29px;
    border: 0;
}

/* bottom bars */
.model-tabs {
    display: flex;
    height: 21px;
    padding-left: 27px;
    background: #f7f7f7;
    border-top: 1px solid #808080;
    border-bottom: 1px solid #808080;
    font-size: 16px;
}

.model-tabs > button {
    padding: 0 9px;
    background: #d2d2d2;
    border-right: 1px solid #808080;
}

.model-tabs > .active {
    padding: 0 12px 0 17px;
    background: #f7f7f7;
}

.model-tabs > .wide {
    padding: 0 22px 0 9px;
}

.steps {
    display: flex;
    border-top: 1px solid #222;
}

.steps button {
    width: 20px;
    background: #a6a8bc;
    border: 1px solid #85879f;
}

.steps svg {
    width: 16px;
    height: 16px;
}

.statusbar {
    display: flex;
    justify-content: space-between;
    height: 21px;
    padding-left: 1px;
    background: #f7f7f7;
    font-size: 15px;
    line-height: 23px;
}

.state {
    display: flex;
    width: 308px;
    gap: 18px;
}

.ime {
    position: fixed;
    right: 0;
    bottom: 1px;
    display: flex;
    align-items: flex-end;
}

.ime-bar {
    display: flex;
    width: 181px;
    height: 32px;
    background: linear-gradient(90deg, #fff 80%, #dfe8ff 90%, #fff4cc);
    border: 1px solid #b8c8de;
    border-left: 0;
}

.ime-bar button {
    width: 30px;
    color: #0a6fd8;
    font-size: 20px;
    font-weight: bold;
}

.watermark {
    position: absolute;
    right: 12px;
    bottom: 8px;
    color: rgba(90, 90, 90, 0.65);
    font-size: 19px;
    line-height: 24px;
    text-shadow: 1px 1px #fff;
    white-space: nowrap;
}
```
